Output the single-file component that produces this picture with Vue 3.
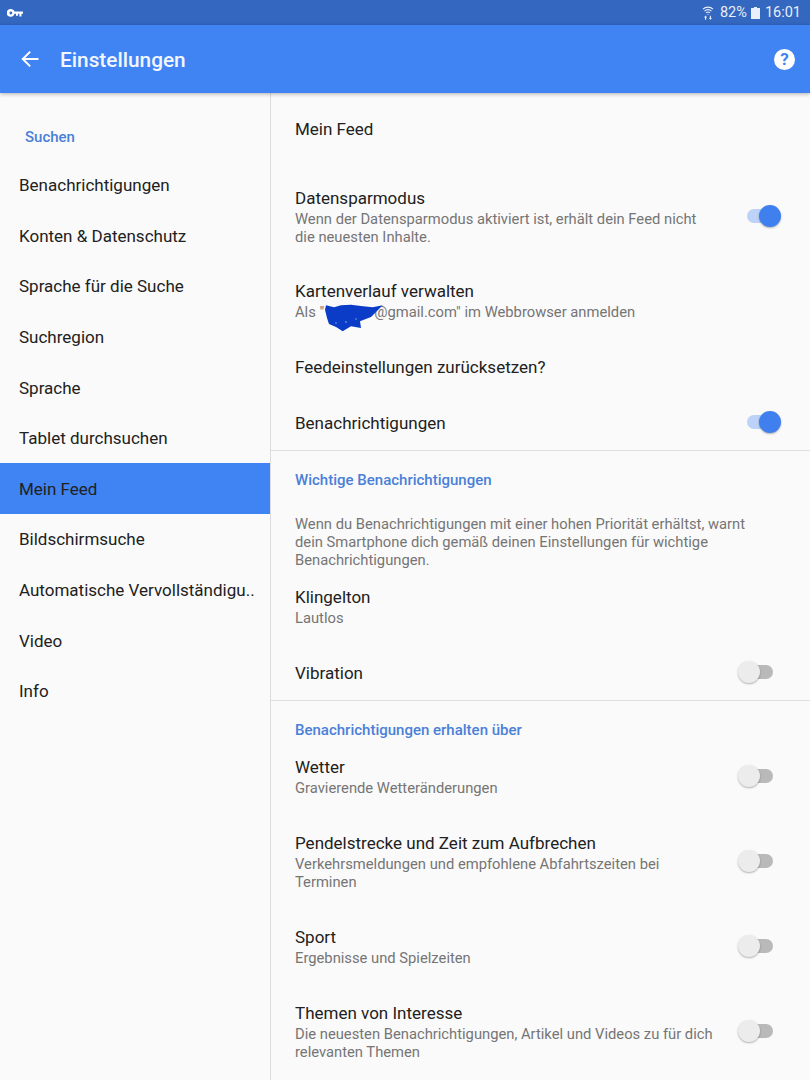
<script setup>
const menu = [
  "Benachrichtigungen",
  "Konten & Datenschutz",
  "Sprache für die Suche",
  "Suchregion",
  "Sprache",
  "Tablet durchsuchen",
  "Mein Feed",
  "Bildschirmsuche",
  "Automatische Vervollständigu..",
  "Video",
  "Info",
];

const alerts = [
  { title: "Wetter", sub: "Gravierende Wetteränderungen" },
  {
    title: "Pendelstrecke und Zeit zum Aufbrechen",
    sub: "Verkehrsmeldungen und empfohlene Abfahrtszeiten bei Terminen",
  },
  { title: "Sport", sub: "Ergebnisse und Spielzeiten" },
  {
    title: "Themen von Interesse",
    sub: "Die neuesten Benachrichtigungen, Artikel und Videos zu für dich relevanten Themen",
  },
];
</script>

<template>
  <div class="screen">
    <div class="status-bar">
      <svg class="key" width="16" height="8" viewBox="0 0 16 8">
        <path fill="#fff" fill-rule="evenodd" d="M3.9 0a3.9 3.9 0 0 1 3.7 2.4H16v2.4h-1.5V7.4h-2.1V4.8H11v2H9V4.8H7.4A3.9 3.9 0 1 1 3.9 0zm0 2.6a1.4 1.4 0 1 0 0 2.8 1.4 1.4 0 0 0 0-2.8z" />
      </svg>
      <div class="status-right">
        <svg width="12" height="14" viewBox="0 0 12 15">
          <path fill="none" stroke="#e8eefa" stroke-width="1.2" d="M.6 3.4a7.6 7.6 0 0 1 10.8 0M2.3 5.4a5.2 5.2 0 0 1 7.4 0M4 7.3a2.8 2.8 0 0 1 4 0" />
          <path fill="#e8eefa" d="M6 8.2l1 1.2H5zM3.4 10.2l1.7 2H4v2.4H2.8v-2.4H1.7zM8.6 14.8l-1.7-2H8v-2.4h1.2v2.4h1.1z" />
        </svg>
        <span class="pct">82%</span>
        <svg class="batt" width="9" height="12" viewBox="0 0 9 12">
          <path fill="#e8eefa" d="M3 0h3v1h3v11H0V1h3z" />
        </svg>
        <span>16:01</span>
      </div>
    </div>

    <header class="app-bar">
      <svg width="18" height="18" viewBox="0 0 18 18">
        <path fill="none" stroke="#fff" stroke-width="2" d="M17.5 9H2M9.2 1.6L1.8 9l7.4 7.4" />
      </svg>
      <h1>Einstellungen</h1>
      <span class="help">?</span>
    </header>

    <div class="body">
      <nav class="sidebar">
        <div class="side-head">Suchen</div>
        <div
          v-for="item in menu"
          :key="item"
          class="side-item"
          :class="{ active: item === 'Mein Feed' }"
        >
          {{ item }}
        </div>
      </nav>

      <main class="panel">
        <div class="row first"><div class="title">Mein Feed</div></div>

        <div class="row feed-gap">
          <div class="text">
            <div class="title">Datensparmodus</div>
            <div class="sub">Wenn der Datensparmodus aktiviert ist, erhält dein Feed nicht die neuesten Inhalte.</div>
          </div>
          <span class="switch on"><i></i><b></b></span>
        </div>

        <div class="row">
          <div class="text wide">
            <div class="title">Kartenverlauf verwalten</div>
            <div class="sub">Als "<span class="redacted">
                <svg width="58" height="28" viewBox="0 0 58 28">
                  <path fill="#0a3cc8" d="M1 1.3L9 3.3 16 1.3 26 .7 36 2 47.7 3.3 57.7 1.3 52 7 46 13 35 17.3 36 24 26 22.3 17.7 27.3 11 23 4 20 2 14 0 5.7z" />
                  <circle cx="21" cy="18" r=".8" fill="#9fb4ee" />
                  <circle cx="11" cy="19" r=".7" fill="#9fb4ee" />
                  <circle cx="31" cy="15" r=".7" fill="#9fb4ee" />
                </svg>
              </span>@gmail.com" im Webbrowser anmelden</div>
          </div>
        </div>

        <div class="row"><div class="title">Feedeinstellungen zurücksetzen?</div></div>

        <div class="row">
          <div class="title">Benachrichtigungen</div>
          <span class="switch on"><i></i><b></b></span>
        </div>

        <section class="group">
          <h2>Wichtige Benachrichtigungen</h2>
          <p class="desc">Wenn du Benachrichtigungen mit einer hohen Priorität erhältst, warnt dein Smartphone dich gemäß deinen Einstellungen für wichtige Benachrichtigungen.</p>
          <div class="row">
            <div class="text">
              <div class="title">Klingelton</div>
              <div class="sub">Lautlos</div>
            </div>
          </div>
          <div class="row">
            <div class="title">Vibration</div>
            <span class="switch"><i></i><b></b></span>
          </div>
        </section>

        <section class="group">
          <h2>Benachrichtigungen erhalten über</h2>
          <div v-for="a in alerts" :key="a.title" class="row">
            <div class="text">
              <div class="title">{{ a.title }}</div>
              <div class="sub">{{ a.sub }}</div>
            </div>
            <span class="switch"><i></i><b></b></span>
          </div>
        </section>
      </main>
    </div>
  </div>
</template>

<style>
html,
body {
  margin: 0;
  background: #fafafa;
}
</style>

<style scoped>
.screen {
  width: 810px;
  height: 1080px;
  overflow: hidden;
  display: flex;
  flex-direction: column;
  background: #fafafa;
  font-family: Roboto, sans-serif;
}

.status-bar {
  height: 25px;
  flex: none;
  display: flex;
  align-items: center;
  justify-content: space-between;
  padding: 0 9px 0 7px;
  background: #3367c0;
  color: #e8eefa;
  font-size: 14.5px;
}

.status-right {
  display: flex;
  align-items: center;
  gap: 4px;
}

.pct {
  margin-left: 2px;
}

.batt {
  margin-right: 1px;
}

.app-bar {
  height: 68px;
  flex: none;
  display: flex;
  align-items: center;
  padding: 0 15px 0 21px;
  background: #4083f3;
  color: #fff;
  box-shadow: 0 1px 4px rgba(0, 0, 0, 0.3);
  position: relative;
  z-index: 1;
}

.app-bar h1 {
  flex: 1;
  margin: 2px 0 0 21px;
  font-size: 20.8px;
  font-weight: 500;
  color: #f2f6fe;
}

.help {
  width: 21px;
  height: 21px;
  border-radius: 50%;
  background: #fff;
  color: #4083f3;
  font-size: 17px;
  font-weight: 700;
  line-height: 21px;
  text-align: center;
}

.body {
  flex: 1;
  display: flex;
  min-height: 0;
}

.sidebar {
  width: 270px;
  flex: none;
  border-right: 1px solid #dcdcdc;
}

.side-head {
  padding: 35.4px 0 13.3px 25px;
  font-size: 15px;
  line-height: 18px;
  font-weight: 500;
  color: #4a80d8;
}

.side-item {
  height: 50.6px;
  box-sizing: border-box;
  padding: 0.6px 0 0 19px;
  line-height: 50px;
  font-size: 17px;
  color: #212121;
  white-space: nowrap;
}

.side-item.active {
  background: #4083f3;
}

.panel {
  flex: 1;
  min-width: 0;
}

.row {
  display: flex;
  align-items: center;
  justify-content: space-between;
  padding: 17px 29px 17px 24px;
}

.row.first {
  margin-top: 8px;
}

.feed-gap {
  margin-top: 13px;
  padding-bottom: 16px;
}

.text {
  width: 420px;
}

.text.wide {
  width: auto;
}

.title {
  font-size: 17px;
  line-height: 22px;
  color: #212121;
}

.sub {
  margin: 1px 0;
  font-size: 14.75px;
  line-height: 18px;
  color: #757575;
}

.redacted {
  display: inline-block;
  position: relative;
  width: 50px;
  height: 18px;
  vertical-align: top;
}

.redacted svg {
  position: absolute;
  left: 1px;
  top: 1px;
}

.switch {
  position: relative;
  flex: none;
  width: 43px;
  height: 22px;
  margin-top: -3px;
}

.switch i {
  position: absolute;
  left: 9px;
  top: 4px;
  width: 26px;
  height: 14px;
  border-radius: 7px;
  background: #b9b9b9;
}

.switch b {
  position: absolute;
  left: 0;
  top: 0;
  width: 22px;
  height: 22px;
  border-radius: 50%;
  background: #ececec;
  box-shadow: 0 1px 2px rgba(0, 0, 0, 0.3);
}

.switch.on i {
  background: #bcd2f8;
}

.switch.on b {
  left: 21px;
  background: #3f80ee;
}

.group {
  border-top: 1px solid #dedede;
  margin-top: -1px;
}

.group h2 {
  margin: 0;
  padding: 20px 24px 0;
  font-size: 15px;
  line-height: 18px;
  font-weight: 500;
  color: #4a80d8;
}

.desc {
  margin: 26px 0 0;
  padding: 0 45px 0 24px;
  font-size: 14.75px;
  line-height: 18px;
  color: #757575;
}
</style>
